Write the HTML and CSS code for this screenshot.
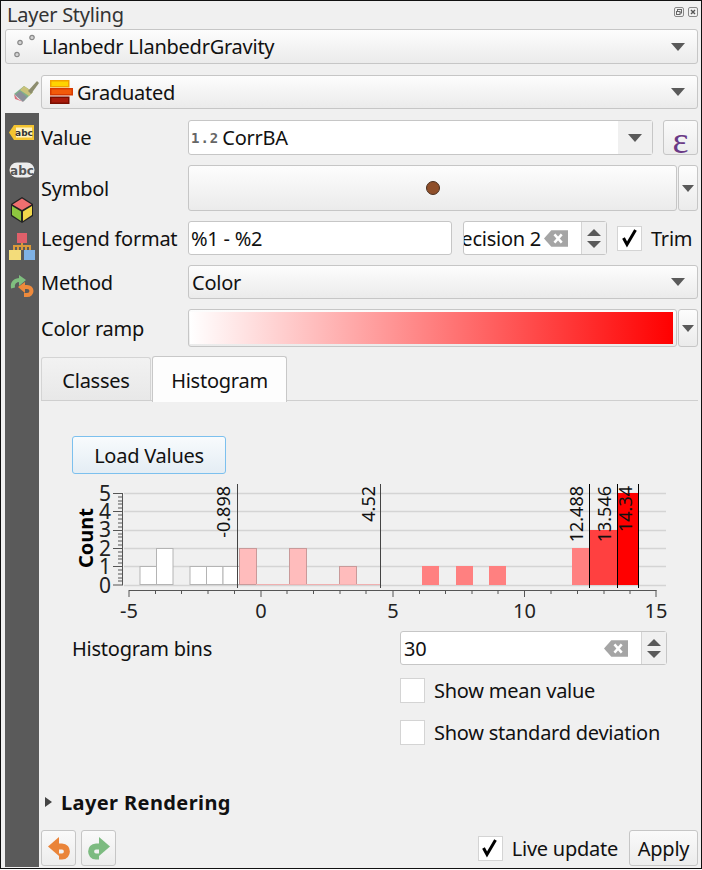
FILE: index.html
```html
<!DOCTYPE html>
<html lang="en">
<head>
  <meta charset="UTF-8">
  <meta name="viewport" content="width=device-width, initial-scale=1.0">
  <title>Layer Styling</title>
  <link rel="stylesheet" href="styles.css">
</head>
<body>
  <div class="panel">
    <div class="title-bar">
      <span>Layer Styling</span>
      <div class="dock-btns">
        <svg width="10" height="10" viewBox="0 0 10 10"><rect x=".5" y=".5" width="9" height="9" rx="1.5" fill="none" stroke="#888"/><rect x="3.5" y="2.5" width="4" height="3.5" fill="none" stroke="#666"/><rect x="2.5" y="4.5" width="3.5" height="3" fill="#eee" stroke="#666"/></svg>
        <svg width="10" height="10" viewBox="0 0 10 10"><rect x=".5" y=".5" width="9" height="9" rx="1.5" fill="none" stroke="#888"/><path d="M3 3l4 4M7 3l-4 4" stroke="#555" stroke-width="1.4"/></svg>
      </div>
    </div>

    <div class="combo layer-combo">
      <svg class="combo-icon" width="26" height="26" viewBox="0 0 26 26"><g fill="#d4d4d4" stroke="#888" stroke-width="1.2"><circle cx="18" cy="3.500" r="2.200"/><circle cx="6" cy="8.500" r="2.200"/><circle cx="3" cy="20.500" r="2.200"/></g></svg>
      <span class="combo-text">Llanbedr LlanbedrGravity</span>
      <i class="arrow"></i>
    </div>

    <div class="renderer-row">
      <svg class="brush" width="28" height="26" viewBox="0 0 28 26">
        <path d="M1 15l10-8 9 6-9 9z" fill="#7fb08a"/>
        <path d="M1 15l4 5 6 3-9-3z" fill="#d8707c"/>
        <path d="M7 11l4-4 9 6-4 4z" fill="#c9c27a"/>
        <path d="M2 16l5-4 7 6-4 5z" fill="#8b8f98"/>
        <path d="M15 12l9-10 2 2-8 11z" fill="#8d8d6e"/>
      </svg>
      <div class="combo renderer-combo">
        <svg class="grad-icon" width="23" height="24" viewBox="0 0 23 24">
          <rect x=".75" y=".75" width="18" height="6" fill="#ffd400" stroke="#f2a100" stroke-width="1.500"/>
          <rect x=".75" y="8.750" width="21.500" height="6" fill="#f25a0a" stroke="#d83a00" stroke-width="1.500"/>
          <rect x=".75" y="17.250" width="18" height="6" fill="#a81a0a" stroke="#7a0e00" stroke-width="1.500"/>
        </svg>
        <span class="combo-text">Graduated</span>
        <i class="arrow"></i>
      </div>
    </div>

    <div class="main">
      <div class="sidebar">
        <svg width="26" height="15" viewBox="0 0 26 15"><path d="M5 0h20v15H5L0 7.500z" fill="#f4c430"/><rect x="7" y="2.500" width="16" height="10" fill="#fff2c0"/><text x="15" y="11" class="icon-text">abc</text></svg>
        <svg class="side-abc" width="26" height="16" viewBox="0 0 26 16"><rect x=".5" y=".5" width="25" height="15" rx="7.500" fill="#ececec"/><text x="13" y="12.500" class="icon-text big">abc</text></svg>
        <svg class="side-cube" width="24" height="27" viewBox="0 0 24 27"><path d="M12 1L1 8v12l11 7 11-7V8z" fill="#222"/><path d="M12 2.500L2.500 8.500 12 14l9.500-5.500z" fill="#ef6f6f"/><path d="M2 10l9 5.500V25l-9-6z" fill="#8ec63f"/><path d="M22 10l-9 5.500V25l9-6z" fill="#f1d84b"/></svg>
        <svg class="side-tree" width="26" height="27" viewBox="0 0 26 27"><rect x="8" y="0" width="10" height="10" fill="#e0606a"/><path d="M13 10v7M5 17v-4h16v4M9 13v8M17 13v8" stroke="#d99a3a" stroke-width="2" fill="none"/><rect x="0" y="17" width="12" height="10" fill="#f3dc7a"/><rect x="15" y="17" width="11" height="10" fill="#7fb2e5"/></svg>
        <svg class="side-swap" width="24" height="23" viewBox="0 0 24 23"><path d="M3 13C2 8 5 5 10 5" stroke="#7fbf7f" stroke-width="4" fill="none"/><path d="M9 0l7 5-7 6z" fill="#7fbf7f"/><path d="M14 12h3c6 0 6 8 0 8h-3" stroke="#ee8a3c" stroke-width="4" fill="none"/><path d="M15 7L8 12l7 6z" fill="#ee8a3c"/></svg>
      </div>

      <div class="content">
        <div class="form">
          <div class="form-row row-value">
            <label>Value</label>
            <div class="field field-value">
              <span class="type-tag">1.2</span>
              <span>CorrBA</span>
              <div class="field-drop"><i class="arrow"></i></div>
            </div>
            <button class="eps-btn">&#949;</button>
          </div>

          <div class="form-row row-symbol">
            <label>Symbol</label>
            <div class="split">
              <div class="combo split-main"><span class="dot"></span></div>
              <div class="combo split-drop"><i class="arrow"></i></div>
            </div>
          </div>

          <div class="form-row row-legend">
            <label>Legend format</label>
            <div class="field legend-input">%1 - %2</div>
            <div class="spin precision">
              <div class="spin-text">
                <span class="spin-clip"><span>Precision 2</span></span>
                <svg class="clear" width="24" height="17" viewBox="0 0 23 16"><path d="M7 0h16v16H7L0 8z" fill="#a5a5a5"/><path d="M10 4l7 8M17 4l-7 8" stroke="#fff" stroke-width="2.400"/></svg>
              </div>
              <div class="spin-btns"><i class="up"></i><i class="down"></i></div>
            </div>
            <span class="check on"><svg width="20" height="20" viewBox="0 0 20 20"><path d="M3.500 10l3.500 6.500L15.500 2" fill="none" stroke="#000" stroke-width="3"/></svg></span>
            <span class="trim">Trim</span>
          </div>

          <div class="form-row row-method">
            <label>Method</label>
            <div class="combo method-combo"><span class="combo-text">Color</span><i class="arrow"></i></div>
          </div>

          <div class="form-row row-ramp">
            <label>Color ramp</label>
            <div class="split">
              <div class="combo split-main"><span class="ramp"></span></div>
              <div class="combo split-drop"><i class="arrow"></i></div>
            </div>
          </div>
        </div>

        <div class="tabs">
          <div class="tab">Classes</div>
          <div class="tab active">Histogram</div>
        </div>

        <div class="tab-page">
          <button class="load-btn">Load Values</button>

          <svg class="chart" width="600" height="146" viewBox="70 480 600 146">
            <!-- grid -->
            <path d="M124 493.500H666M124 511.500H666M124 530.500H666M124 548.500H666M124 566.500H666M124 585.500H666" stroke="#d4d4d4" stroke-width="1.500" fill="none"/>

            <!-- bars -->
            <g fill="#fff" stroke="#b4b4b4">
              <rect x="140" y="566.500" width="16.500" height="18"/>
              <rect x="156.500" y="548.500" width="16.500" height="36"/>
              <rect x="190" y="566.500" width="16.500" height="18"/>
              <rect x="206.500" y="566.500" width="16.500" height="18"/>
              <rect x="223" y="566.500" width="16.500" height="18"/>
            </g>
            <g fill="#ffbcbc" stroke="#c99a9a">
              <rect x="239.500" y="548.500" width="17" height="36"/>
              <rect x="289.500" y="548.500" width="17" height="36"/>
              <rect x="339.500" y="566.500" width="17" height="18"/>
            </g>
            <path d="M256 584.500H381" stroke="#f0b0b0" fill="none"/>
            <g fill="#ff8080">
              <rect x="422" y="566" width="17" height="19"/>
              <rect x="456" y="566" width="17" height="19"/>
              <rect x="489" y="566" width="17" height="19"/>
              <rect x="572" y="548" width="17" height="37"/>
            </g>
            <rect x="589" y="530" width="29" height="55" fill="#ff4040"/>
            <rect x="618" y="493" width="20" height="92" fill="#f00"/>

            <!-- class breaks -->
            <path d="M237.500 484V588M380.500 484V588" stroke="#444" fill="none"/>
            <path d="M589.500 484V588M617.500 484V588M638.500 484V588" stroke="#000" fill="none"/>
            <g class="break-label">
              <text transform="translate(230 486) rotate(-90)">-0.898</text>
              <text transform="translate(375 486) rotate(-90)">4.52</text>
              <text transform="translate(583 486) rotate(-90)">12.488</text>
              <text transform="translate(611 486) rotate(-90)">13.546</text>
              <text transform="translate(632 486) rotate(-90)">14.34</text>
            </g>

            <!-- y axis -->
            <path d="M122.500 493V585M113 493.500H123M113 511.500H123M113 530.500H123M113 548.500H123M113 566.500H123M113 585H123
                     M118 497H123M118 501H123M118 504H123M118 508H123M118 515H123M118 519H123M118 523H123M118 527H123
                     M118 534H123M118 537H123M118 541H123M118 545H123M118 552H123M118 556H123M118 559H123M118 563H123
                     M118 570H123M118 574H123M118 578H123M118 581H123" stroke="#555" fill="none"/>
            <g class="y-tick">
              <text x="111" y="501">5</text>
              <text x="111" y="519">4</text>
              <text x="111" y="537">3</text>
              <text x="111" y="556">2</text>
              <text x="111" y="574">1</text>
              <text x="111" y="593">0</text>
            </g>
            <text class="axis-title" transform="translate(93 538) rotate(-90)">Count</text>

            <!-- x axis -->
            <path d="M129 590.500H656.500M129 590V597M261 590V597M393 590V597M524.500 590V597M656 590V597
                     M155.500 590V594M181.500 590V594M208 590V594M234.500 590V594M287 590V594M313.500 590V594M340 590V594M366 590V594
                     M419.500 590V594M445.500 590V594M472 590V594M498 590V594M551 590V594M577.500 590V594M604 590V594M630 590V594" stroke="#555" fill="none"/>
            <g class="x-tick">
              <text x="129" y="618">-5</text>
              <text x="261" y="618">0</text>
              <text x="393" y="618">5</text>
              <text x="524.500" y="618">10</text>
              <text x="656" y="618">15</text>
            </g>
          </svg>

          <div class="bins-row">
            <label>Histogram bins</label>
            <div class="spin bins">
              <div class="spin-text">
                <span class="spin-val">30</span>
                <svg class="clear" width="24" height="17" viewBox="0 0 23 16"><path d="M7 0h16v16H7L0 8z" fill="#a5a5a5"/><path d="M10 4l7 8M17 4l-7 8" stroke="#fff" stroke-width="2.400"/></svg>
              </div>
              <div class="spin-btns"><i class="up"></i><i class="down"></i></div>
            </div>
          </div>

          <div class="check-row"><span class="check"></span><span>Show mean value</span></div>
          <div class="check-row"><span class="check"></span><span>Show standard deviation</span></div>
        </div>

        <div class="group-title"><i class="tri"></i><span>Layer Rendering</span></div>

        <div class="bottom-bar">
          <button class="tool-btn"><svg width="24" height="24" viewBox="0 0 24 24"><path d="M11 10.500h4c6.500 0 6.500 10 0 10h-3" stroke="#ea8439" stroke-width="6" fill="none"/><path d="M12 1L1 10.500 12 20z" fill="#ea8439"/></svg></button>
          <button class="tool-btn"><svg width="24" height="24" viewBox="0 0 24 24"><path d="M13 10.500H9c-6.500 0-6.500 10 0 10h3" stroke="#7cbb80" stroke-width="6" fill="none"/><path d="M12 1l11 9.500L12 20z" fill="#7cbb80"/></svg></button>
          <div class="live">
            <span class="check on"><svg width="20" height="20" viewBox="0 0 20 20"><path d="M3.500 10l3.500 6.500L15.500 2" fill="none" stroke="#000" stroke-width="3"/></svg></span>
            <span>Live update</span>
          </div>
          <button class="apply-btn">Apply</button>
        </div>
      </div>
    </div>
  </div>
</body>
</html>
```

FILE: styles.css
```css
* {
  box-sizing: border-box;
}

body {
  margin: 0;
  background-color: #fff;
  font-family: 'Noto Sans', sans-serif;
  font-size: 20px;
  letter-spacing: -0.25px;
  color: #111;
}

.panel {
  width: 702px;
  height: 869px;
  padding: 0 3px 0 4px;
  background-color: #f0f0f0;
  border: 1px solid #111;
  display: flex;
  flex-direction: column;
}

.title-bar {
  height: 28px;
  display: flex;
  justify-content: space-between;
  align-items: center;
  padding: 0 0 2px 2px;
  color: #333;
}

.dock-btns {
  display: flex;
  gap: 4px;
  margin-top: -4px;
}

.dock-btns svg {
  display: block;
}

.combo {
  display: flex;
  align-items: center;
  background: linear-gradient(#fdfdfd, #ebebeb);
  border: 1px solid #c6c6c6;
  border-radius: 3px;
}

.combo-text {
  flex: 1;
}

.arrow {
  display: block;
  width: 0;
  height: 0;
  border-left: 7px solid transparent;
  border-right: 7px solid transparent;
  border-top: 8px solid #5a5a5a;
}

.layer-combo {
  height: 35px;
  padding: 0 12px 0 8px;
  gap: 2px;
}

.renderer-row {
  display: flex;
  align-items: center;
  margin-top: 11px;
  height: 34px;
}

.brush {
  margin-left: 8px;
  flex: none;
}

.renderer-combo {
  flex: 1;
  height: 34px;
  padding: 0 12px 0 8px;
  gap: 4px;
}

.main {
  flex: 1;
  display: flex;
  margin-top: 4px;
  min-height: 0;
}

.sidebar {
  width: 34px;
  margin-bottom: 1px;
  margin-right: 2px;
  padding-top: 12px;
  background-color: #5a5a5a;
  display: flex;
  flex-direction: column;
  align-items: center;
  flex: none;
}

.sidebar svg {
  display: block;
}

.side-abc {
  margin-top: 22px;
}

.side-cube {
  margin-top: 18px;
}

.side-tree {
  margin-top: 10px;
}

.side-swap {
  margin-top: 15px;
}

.icon-text {
  font-family: 'DejaVu Sans', sans-serif;
  font-size: 9px;
  font-weight: bold;
  letter-spacing: 0;
  text-anchor: middle;
  fill: #333;
}

.icon-text.big {
  font-size: 12px;
  fill: #555;
}

.content {
  flex: 1;
  display: flex;
  flex-direction: column;
  min-width: 0;
}

.form {
  padding-top: 7px;
  display: flex;
  flex-direction: column;
  gap: 10px;
}

.form-row {
  display: flex;
  align-items: center;
}

.form-row label {
  width: 147px;
  flex: none;
}

.row-value {
  height: 35px;
}

.row-symbol {
  height: 46px;
}

.row-legend,
.row-method {
  height: 34px;
}

.row-ramp {
  height: 38px;
}

.field {
  height: 100%;
  background-color: #fff;
  border: 1px solid #c6c6c6;
  border-radius: 3px;
  display: flex;
  align-items: center;
}

.field-value {
  width: 465px;
  padding-left: 2px;
  gap: 3px;
}

.type-tag {
  font-family: 'DejaVu Sans Mono', monospace;
  font-size: 14px;
  font-weight: bold;
  color: #666;
  letter-spacing: 1px;
}

.field-drop {
  margin-left: auto;
  width: 34px;
  height: 100%;
  background-color: #f0f0f0;
  display: flex;
  align-items: center;
  justify-content: center;
}

.eps-btn {
  width: 35px;
  height: 35px;
  margin-left: 10px;
  padding: 0 0 12px;
  background: linear-gradient(#fafafa, #ececec);
  border: 1px solid #c6c6c6;
  border-radius: 3px;
  color: #6a3a86;
  font-family: 'Liberation Serif', serif;
  font-size: 38px;
  line-height: 1;
}

.split {
  flex: 1;
  height: 100%;
  display: flex;
  gap: 1px;
}

.split-main {
  flex: 1;
  justify-content: center;
}

.split-drop {
  width: 20px;
  justify-content: center;
}

.split-drop .arrow {
  border-left-width: 6px;
  border-right-width: 6px;
  border-top-width: 7px;
}

.dot {
  width: 14px;
  height: 14px;
  border-radius: 50%;
  background-color: #8f4f2a;
  border: 1px solid #4a3020;
}

.ramp {
  flex: 1;
  height: 32px;
  margin: 0 3px 0 1px;
  background: linear-gradient(to right, #fff, #f00);
}

.legend-input {
  width: 264px;
  padding-left: 2px;
}

.spin {
  display: flex;
  height: 100%;
  background-color: #fff;
  border: 1px solid #c6c6c6;
  border-radius: 3px;
}

.spin-text {
  flex: 1;
  min-width: 0;
  display: flex;
  align-items: center;
}

.spin-clip {
  flex: 1;
  min-width: 0;
  overflow: hidden;
  display: flex;
  justify-content: flex-end;
  white-space: nowrap;
}

.spin-val {
  flex: 1;
  padding-left: 3px;
}

.clear {
  flex: none;
  display: block;
  margin-right: 13px;
}

.spin-btns {
  width: 25px;
  background-color: #f0f0f0;
  border-left: 1px solid #d4d4d4;
  display: flex;
  flex-direction: column;
  align-items: center;
  justify-content: center;
  gap: 5px;
  flex: none;
}

.up,
.down {
  display: block;
  width: 0;
  height: 0;
  border-left: 7px solid transparent;
  border-right: 7px solid transparent;
}

.up {
  border-bottom: 7px solid #5a5a5a;
}

.down {
  border-top: 7px solid #5a5a5a;
}

.precision {
  width: 144px;
  margin-left: 11px;
}

.precision .spin-clip {
  padding-right: 3px;
}

.check {
  width: 25px;
  height: 25px;
  background-color: #fff;
  border: 1px solid #d4d4d4;
  display: flex;
  align-items: center;
  justify-content: center;
  flex: none;
}

.row-legend .check {
  margin-left: 10px;
}

.trim {
  margin-left: 9px;
}

.method-combo {
  flex: 1;
  height: 100%;
  padding: 0 12px 0 3px;
}

.tabs {
  display: flex;
  align-items: flex-end;
  height: 44px;
  margin-top: 10px;
  border-bottom: 1px solid #cfcfcf;
}

.tab {
  width: 110px;
  height: 43px;
  padding-top: 3px;
  background: linear-gradient(#f2f2f2, #e8e8e8);
  border: 1px solid #d4d4d4;
  border-bottom: none;
  border-radius: 3px 3px 0 0;
  display: flex;
  align-items: center;
  justify-content: center;
}

.tab.active {
  width: 135px;
  height: 46px;
  margin-left: 1px;
  margin-bottom: -2px;
  padding-top: 2px;
  background: #fdfdfd;
  border-color: #c8c8c8;
}

.tab-page {
  padding-top: 35px;
  height: 389px;
}

.load-btn {
  display: block;
  width: 154px;
  height: 38px;
  margin-left: 31px;
  background: linear-gradient(#f8fbfd, #e4edf4);
  border: 1px solid #7cc0ee;
  border-radius: 3px;
  font-family: inherit;
  font-size: 20px;
  letter-spacing: inherit;
  color: #111;
}

.chart {
  display: block;
  margin: 6px 0 0 29px;
  font-family: 'Noto Sans', sans-serif;
  letter-spacing: 0;
}

.break-label text {
  font-size: 18px;
  text-anchor: end;
  fill: #111;
}

.y-tick text {
  font-size: 21px;
  text-anchor: end;
  fill: #222;
}

.axis-title {
  font-size: 20px;
  font-weight: bold;
  text-anchor: middle;
  fill: #000;
}

.x-tick text {
  font-size: 20px;
  text-anchor: middle;
  fill: #222;
}

.bins-row {
  display: flex;
  align-items: center;
  height: 34px;
  margin: 5px 0 0 31px;
}

.bins-row label {
  width: 328px;
}

.bins {
  width: 267px;
}

.check-row {
  display: flex;
  align-items: center;
  gap: 9px;
  height: 25px;
  margin: 17px 0 0 359px;
}

.bins-row + .check-row {
  margin-top: 13px;
}

.group-title {
  display: flex;
  align-items: center;
  gap: 9px;
  height: 26px;
  padding: 0 0 2px 4px;
  font-weight: bold;
  letter-spacing: 0.4px;
}

.tri {
  display: block;
  width: 0;
  height: 0;
  border-top: 5px solid transparent;
  border-bottom: 5px solid transparent;
  border-left: 7px solid #444;
}

.bottom-bar {
  display: flex;
  align-items: center;
  gap: 5px;
  height: 36px;
  margin-top: 14px;
}

.tool-btn {
  width: 35px;
  height: 36px;
  padding: 0;
  background: linear-gradient(#fafafa, #ececec);
  border: 1px solid #c6c6c6;
  border-radius: 3px;
  display: flex;
  align-items: center;
  justify-content: center;
}

.live {
  display: flex;
  align-items: center;
  gap: 9px;
  margin-left: auto;
}

.apply-btn {
  width: 69px;
  height: 36px;
  margin-left: 6px;
  padding: 0;
  background: linear-gradient(#fafafa, #ececec);
  border: 1px solid #c6c6c6;
  border-radius: 3px;
  font-family: inherit;
  font-size: 20px;
  letter-spacing: inherit;
  color: #111;
}
```
